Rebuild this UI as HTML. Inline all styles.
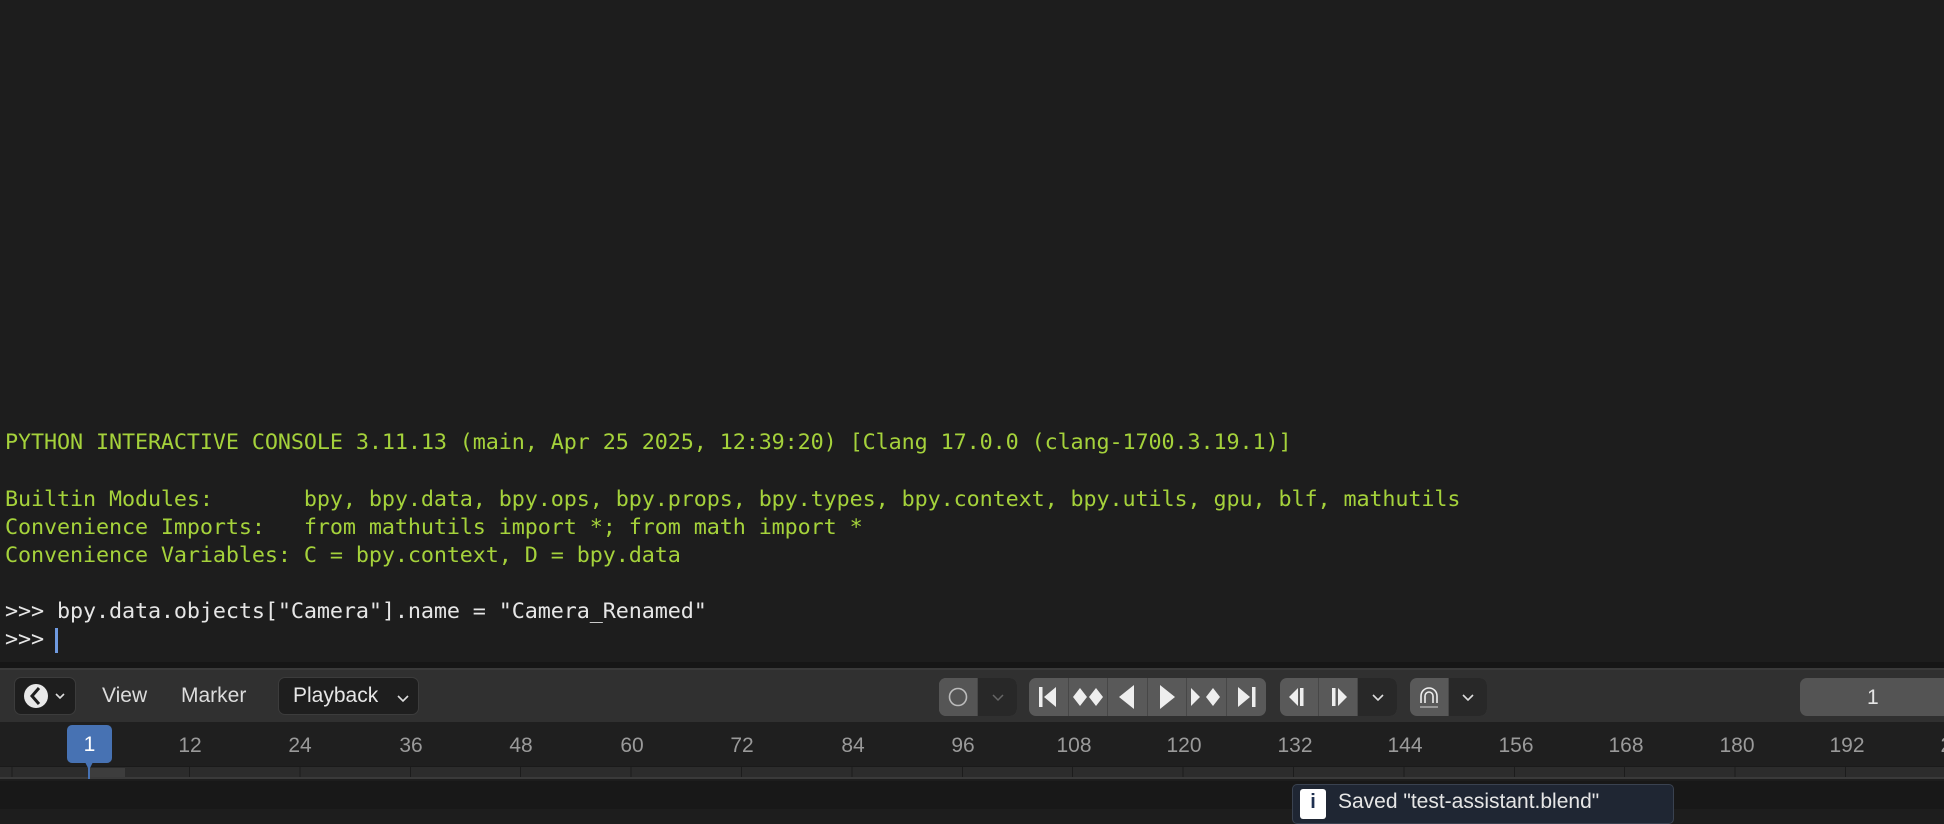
<!DOCTYPE html>
<html><head><meta charset="utf-8"><style>
*{margin:0;padding:0;box-sizing:border-box}
body{width:1944px;height:809px;background:#1d1d1d;position:relative;overflow:hidden;font-family:"Liberation Sans","DejaVu Sans",sans-serif}
.con{position:absolute;left:5px;font-family:"DejaVu Sans Mono",monospace;font-size:21.75px;color:#a5d23b;white-space:pre;letter-spacing:-0.1px}
.w{color:#e6e6e6}
.hdr{position:absolute;left:0;top:668px;width:1944px;height:54px;background:#303030;border-top:2px solid #3a3a3a}
.ab{position:absolute;background:#1e1e1e;border-radius:7px}
.g{position:absolute;top:8px;height:38px;border-radius:7px;background:#595959;overflow:hidden;display:flex}
.g div{height:100%;border-right:1px solid #474747;display:flex;align-items:center;justify-content:center}
.d{background:#282828!important}
.t{position:absolute;color:#dcdcdc;font-size:21px;top:14px}
.nums{position:absolute;top:722px;left:0;width:1944px;height:44px;background:#1f1f1f}
.n{position:absolute;top:12px;color:#9a9a9a;font-size:21px;transform:translateX(-50%)}
.strip{position:absolute;top:766px;left:0;width:1944px;height:13px;background:#2c2c2c;border-top:1px solid #1a1a1a;border-bottom:2px solid #3a3a3a;background-image:repeating-linear-gradient(90deg,transparent 0 79px,#1c1c1c 79px 80px,transparent 80px 110.4px);background-position:110px 0}
</style></head><body>
<div style="position:absolute;left:0;top:0;width:1944px;height:664px;background:#1d1d1d"></div>
<div class="con" style="top:430px">PYTHON INTERACTIVE CONSOLE 3.11.13 (main, Apr 25 2025, 12:39:20) [Clang 17.0.0 (clang-1700.3.19.1)]</div>
<div class="con" style="top:487px">Builtin Modules:       bpy, bpy.data, bpy.ops, bpy.props, bpy.types, bpy.context, bpy.utils, gpu, blf, mathutils</div>
<div class="con" style="top:515px">Convenience Imports:   from mathutils import *; from math import *</div>
<div class="con" style="top:543px">Convenience Variables: C = bpy.context, D = bpy.data</div>
<div class="con w" style="top:599px">&gt;&gt;&gt; bpy.data.objects["Camera"].name = "Camera_Renamed"</div>
<div class="con w" style="top:627px">&gt;&gt;&gt;</div>
<div style="position:absolute;left:55px;top:628px;width:3px;height:25px;background:#6f9ae0"></div>
<div style="position:absolute;left:0;top:662px;width:1944px;height:6px;background:#161616"></div>

<div class="hdr">
 <div class="ab" style="left:14px;top:7px;width:62px;height:38px;border:1px solid #3c3c3c">
  <svg width="62" height="38" style="position:absolute;left:-1px;top:-1px"><circle cx="22" cy="19" r="12" fill="#e8e8e8"/><path d="M25 11 L18 19 L25 27" stroke="#1e1e1e" stroke-width="3" fill="none"/><path d="M42 17 l4 4 4-4" stroke="#ddd" stroke-width="1.6" fill="none"/></svg>
 </div>
 <div class="t" style="left:102px">View</div>
 <div class="t" style="left:181px">Marker</div>
 <div class="ab" style="left:278px;top:7px;width:141px;height:38px;border:1px solid #3c3c3c"><span style="position:absolute;left:14px;top:6px;color:#e6e6e6;font-size:21px">Playback</span><svg width="20" height="20" style="position:absolute;left:116px;top:11px"><path d="M3 7 l5 5 5-5" stroke="#ddd" stroke-width="1.6" fill="none"/></svg></div>
 <div class="g" style="left:939px;width:78px"><div style="width:39px;background:#555"><svg width="24" height="24"><circle cx="12" cy="12" r="8.5" stroke="#bbb" stroke-width="1.6" fill="none"/></svg></div><div class="d" style="width:39px;border:none"><svg width="16" height="16"><path d="M3 6 l5 5 5-5" stroke="#666" stroke-width="1.5" fill="none"/></svg></div></div>
 <div class="g" style="left:1029px;width:237px">
  <div style="width:39.5px"><svg width="26" height="26" fill="#eee"><rect x="4" y="3" width="3.5" height="20"/><path d="M21 3 L9 13 L21 23Z"/></svg></div>
  <div style="width:39.5px"><svg width="32" height="26" fill="#eee"><path d="M8 4 L15 13 L8 22 L1 13Z M24 4 L31 13 L24 22 L17 13Z"/></svg></div>
  <div style="width:39.5px"><svg width="26" height="26" fill="#eee"><path d="M20 1 L5 13 L20 25Z"/></svg></div>
  <div style="width:39.5px"><svg width="26" height="26" fill="#eee"><path d="M6 1 L21 13 L6 25Z"/></svg></div>
  <div style="width:39.5px"><svg width="32" height="26" fill="#eee"><path d="M1 4 L10 13 L1 22Z M23 4 L30 13 L23 22 L16 13Z"/></svg></div>
  <div style="width:39.5px;border:none"><svg width="26" height="26" fill="#eee"><path d="M5 3 L17 13 L5 23Z"/><rect x="19" y="3" width="3.5" height="20"/></svg></div>
 </div>
 <div class="g" style="left:1280px;width:117px">
  <div style="width:39px"><svg width="26" height="26" fill="#eee"><path d="M12 4 L3 13 L12 22Z"/><rect x="14" y="4" width="3.5" height="18"/></svg></div>
  <div style="width:39px"><svg width="26" height="26" fill="#eee"><rect x="7" y="4" width="3.5" height="18"/><path d="M13 4 L22 13 L13 22Z"/></svg></div>
  <div class="d" style="width:39px;border:none"><svg width="16" height="16"><path d="M3 6 l5 5 5-5" stroke="#ddd" stroke-width="1.6" fill="none"/></svg></div>
 </div>
 <div class="g" style="left:1410px;width:77px">
  <div style="width:39px"><svg width="26" height="26"><path d="M5 19 V12 a8 8 0 0 1 16 0 V19 M9 19 V12 a4 4 0 0 1 8 0 V19" stroke="#eee" stroke-width="1.6" fill="none"/><path d="M4 23 H22" stroke="#aaa" stroke-width="1.5"/></svg></div>
  <div class="d" style="width:38px;border:none"><svg width="16" height="16"><path d="M3 6 l5 5 5-5" stroke="#ddd" stroke-width="1.6" fill="none"/></svg></div>
 </div>
 <div style="position:absolute;left:1800px;top:8px;width:160px;height:38px;background:#545454;border-radius:7px"><span style="position:absolute;left:67px;top:8px;color:#e6e6e6;font-size:21px">1</span></div>
</div>

<div class="nums">
 <div class="n" style="left:190px">12</div><div class="n" style="left:300px">24</div><div class="n" style="left:411px">36</div><div class="n" style="left:521px">48</div><div class="n" style="left:632px">60</div><div class="n" style="left:742px">72</div><div class="n" style="left:853px">84</div><div class="n" style="left:963px">96</div><div class="n" style="left:1074px">108</div><div class="n" style="left:1184px">120</div><div class="n" style="left:1295px">132</div><div class="n" style="left:1405px">144</div><div class="n" style="left:1516px">156</div><div class="n" style="left:1626px">168</div><div class="n" style="left:1737px">180</div><div class="n" style="left:1847px">192</div><div class="n" style="left:1958px">204</div>
</div>
<div class="strip"></div>
<div style="position:absolute;left:88px;top:768px;width:37px;height:9px;background:#3d3d3d"></div>
<div style="position:absolute;left:67px;top:725px;width:45px;height:38px;background:#4772b3;border-radius:5px"><span style="position:absolute;width:100%;text-align:center;top:8px;color:#fff;font-size:21px">1</span></div>
<div style="position:absolute;left:84px;top:760px;width:0;height:0;border-left:5px solid transparent;border-right:5px solid transparent;border-top:10px solid #4772b3"></div>
<div style="position:absolute;left:88px;top:768px;width:2px;height:11px;background:#4772b3"></div>
<div style="position:absolute;left:0;top:781px;width:1944px;height:28px;background:#181818"></div>
<div style="position:absolute;left:1292px;top:784px;width:382px;height:40px;background:#1f2633;border:1px solid #3a4250;border-radius:5px">
 <div style="position:absolute;left:7px;top:4px;width:26px;height:30px;background:#fff;border-radius:3px;color:#1e3050;font-weight:bold;font-size:20px;text-align:center;line-height:26px">i</div>
 <div style="position:absolute;left:45px;top:5px;color:#e6e6e6;font-size:21px">Saved "test-assistant.blend"</div>
</div>
</body></html>
